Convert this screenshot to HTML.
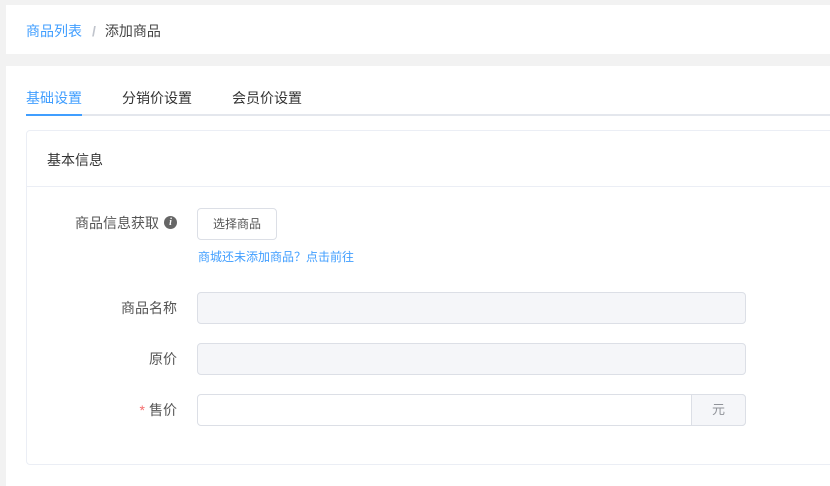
<!DOCTYPE html>
<html><head><meta charset="utf-8"><style>
*{box-sizing:border-box;margin:0;padding:0}
body{width:830px;height:479px;background:#f2f2f2;font-family:"Liberation Sans","Noto Sans CJK SC",sans-serif;font-size:14px;color:#333;position:relative;overflow:hidden}
.a{position:absolute}
.card1{left:6px;top:5px;width:830px;height:49px;background:#fff}
.card2{left:6px;top:66px;width:830px;height:420px;background:#fff}
.lbl{position:absolute;width:160px;text-align:right;color:#555;font-size:14px;left:17px}
.inp{position:absolute;left:197px;width:549px;height:32px;border:1px solid #dcdfe6;border-radius:4px;background:#f5f6f9}
</style></head><body>
<div class="a card1"></div>
<div class="a" style="left:26px;top:21px;font-size:14px"><span style="color:#409eff">商品列表</span><span style="color:#c0c4cc;margin:0 9px 0 10px;font-weight:bold">/</span><span style="color:#444">添加商品</span></div>
<div class="a card2"></div>
<div class="a" style="left:26px;top:88px;color:#409eff">基础设置</div>
<div class="a" style="left:122px;top:88px;color:#333">分销价设置</div>
<div class="a" style="left:232px;top:88px;color:#333">会员价设置</div>
<div class="a" style="left:26px;top:114px;width:804px;height:2px;background:#e4e7ed"></div>
<div class="a" style="left:26px;top:114px;width:56px;height:2px;background:#409eff"></div>
<div class="a" style="left:26px;top:130px;width:810px;height:335px;border:1px solid #ebeef5;border-radius:4px;background:#fff"></div>
<div class="a" style="left:47px;top:150px;color:#333">基本信息</div>
<div class="a" style="left:27px;top:186px;width:803px;height:1px;background:#ebeef5"></div>
<div class="lbl" style="top:213px;left:0;width:159px">商品信息获取</div>
<div class="a" style="left:164px;top:216px;width:13px;height:13px;border-radius:50%;background:#666;color:#fff;font-size:10px;font-weight:bold;font-style:italic;text-align:center;line-height:13px;font-family:'Liberation Serif',serif">i</div>
<div class="a" style="left:197px;top:208px;width:80px;height:32px;border:1px solid #dcdfe6;border-radius:4px;font-size:12px;color:#555;text-align:center;line-height:30px">选择商品</div>
<div class="a" style="left:198px;top:248px;font-size:12px;color:#409eff">商城还未添加商品？点击前往</div>
<div class="lbl" style="top:298px">商品名称</div>
<div class="inp" style="top:292px"></div>
<div class="lbl" style="top:349px">原价</div>
<div class="inp" style="top:343px"></div>
<div class="lbl" style="top:400px"><span style="color:#f56c6c;margin-right:4px">*</span>售价</div>
<div class="inp" style="top:394px;background:#fff"></div>
<div class="a" style="left:691px;top:394px;width:55px;height:32px;border:1px solid #dcdfe6;border-radius:0 4px 4px 0;background:#f5f6f9;color:#909399;text-align:center;line-height:30px;font-size:13px">元</div>
</body></html>
